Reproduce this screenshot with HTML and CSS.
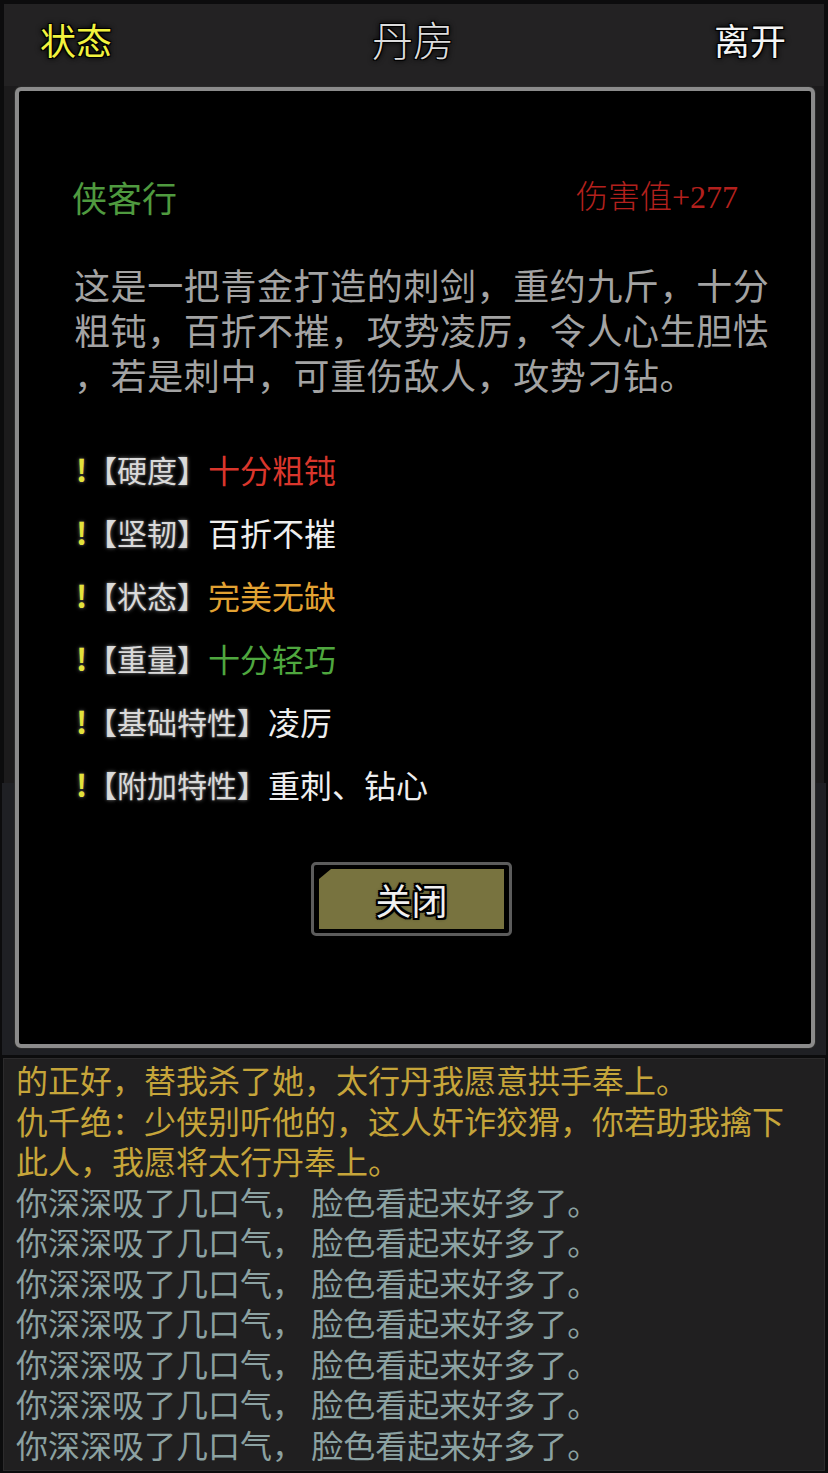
FILE: index.html
```html
<!DOCTYPE html>
<html lang="zh-CN">
<head>
<meta charset="utf-8">
<title>丹房</title>
<link rel="stylesheet" href="styles.css">
</head>
<body>
<div class="app">
  <header class="header">
    <span class="hbtn hbtn-status">状态</span>
    <span class="htitle">丹房</span>
    <span class="hbtn hbtn-leave">离开</span>
  </header>
  <div class="scene"></div>
  <div class="lower"></div>
  <div class="log">
    <p class="log-line y">的正好，替我杀了她，太行丹我愿意拱手奉上。</p>
    <p class="log-line y">仇千绝：少侠别听他的，这人奸诈狡猾，你若助我擒下</p>
    <p class="log-line y">此人，我愿将太行丹奉上。</p>
    <p class="log-line t">你深深吸了几口气， 脸色看起来好多了。</p>
    <p class="log-line t">你深深吸了几口气， 脸色看起来好多了。</p>
    <p class="log-line t">你深深吸了几口气， 脸色看起来好多了。</p>
    <p class="log-line t">你深深吸了几口气， 脸色看起来好多了。</p>
    <p class="log-line t">你深深吸了几口气， 脸色看起来好多了。</p>
    <p class="log-line t">你深深吸了几口气， 脸色看起来好多了。</p>
    <p class="log-line t">你深深吸了几口气， 脸色看起来好多了。</p>
  </div>

  <div class="modal">
    <div class="title-row">
      <span class="item-name">侠客行</span>
      <span class="item-dmg">伤害值+277</span>
    </div>
    <div class="desc">
      <span class="desc-line">这是一把青金打造的刺剑，重约九斤，十分</span>
      <span class="desc-line">粗钝，百折不摧，攻势凌厉，令人心生胆怯</span>
      <span class="desc-line">，若是刺中，可重伤敌人，攻势刁钻。</span>
    </div>
    <ul class="attrs">
      <li class="attr"><span class="bang">!</span><span class="label">【硬度】</span><span class="val red">十分粗钝</span></li>
      <li class="attr"><span class="bang">!</span><span class="label">【坚韧】</span><span class="val white">百折不摧</span></li>
      <li class="attr"><span class="bang">!</span><span class="label">【状态】</span><span class="val orange">完美无缺</span></li>
      <li class="attr"><span class="bang">!</span><span class="label">【重量】</span><span class="val green">十分轻巧</span></li>
      <li class="attr"><span class="bang">!</span><span class="label">【基础特性】</span><span class="val white">凌厉</span></li>
      <li class="attr"><span class="bang">!</span><span class="label">【附加特性】</span><span class="val white">重刺、钻心</span></li>
    </ul>
    <div class="btn-row">
      <div class="btn"><div class="btn-inner">关闭</div></div>
    </div>
  </div>
</div>
</body>
</html>
```

FILE: styles.css
```css
* { box-sizing: border-box; }
html, body { margin: 0; padding: 0; background: #0c0c0d; }
body {
  font-family: "Noto Sans CJK SC", "Noto Sans", sans-serif;
}
.app {
  width: 828px;
  height: 1473px;
  position: relative;
  overflow: hidden;
  background: #0c0c0d;
}
.header {
  height: 82px;
  margin: 4px 4px 0;
  background: #232223;
  display: flex;
  align-items: center;
  justify-content: space-between;
  padding: 0 38px 12px 36px;
}
.hbtn, .htitle {
  font-size: 36px;
  line-height: 40px;
  text-shadow: 1px 1px 0 #000, -1px -1px 0 #000, 1px -1px 0 #000, -1px 1px 0 #000, 0 0 4px #000, 0 0 6px #000;
}
.hbtn-status { color: #f2f23e; }
.hbtn-leave { color: #f4f4f4; }
.htitle {
  font-size: 41px;
  font-weight: 300;
  color: #dcdcdc;
  margin-bottom: 3px;
}
.scene {
  height: 697px;
  margin: 0 4px;
  background: #1c1b1c;
}
.lower {
  height: 272px;
  margin: 0 2px;
  background: #1f2024;
}
.log {
  height: 413px;
  margin: 3px 3px 0;
  background: #201f20;
  border: 1px solid #2c2b2c;
  padding: 0 0 0 12px;
}
.log-line {
  margin: 0;
  font-size: 32px;
  line-height: 40.5px;
  white-space: nowrap;
}
.log-line.y { color: #c6a53a; }
.log-line.t { color: #8ca2a2; }

.modal {
  position: absolute;
  left: 15px;
  top: 87px;
  width: 800px;
  height: 961px;
  background: #000;
  border: 4px solid #8b8b8b;
  border-radius: 6px;
  box-shadow: 0 0 0 1px #2a2a2a;
  padding: 86px 73px 0 53px;
  display: flex;
  flex-direction: column;
}
.title-row {
  display: flex;
  justify-content: space-between;
  align-items: center;
  height: 40px;
}
.item-name {
  font-size: 35px;
  line-height: 40px;
  color: #4f9a3f;
}
.item-dmg {
  font-family: "Liberation Serif", "Noto Sans CJK SC", serif;
  font-size: 32px;
  line-height: 40px;
  color: #b3201d;
  font-weight: 300;
}
.desc {
  margin-top: 45px;
  display: flex;
  flex-direction: column;
  padding-left: 2px;
}
.desc-line {
  font-size: 36px;
  line-height: 45px;
  letter-spacing: 0.6px;
  color: #a3a3a3;
  white-space: nowrap;
}
.attrs {
  list-style: none;
  margin: 40px 0 0;
  padding: 0 0 0 4px;
}
.attr {
  height: 63px;
  display: flex;
  align-items: center;
  white-space: nowrap;
}
.bang {
  font-size: 30px;
  color: #e3e23a;
  font-weight: 700;
  text-shadow: 0 0 4px #555, 0 0 2px #444;
  width: 11px;
}
.label {
  font-size: 30px;
  color: #dadada;
  text-shadow: 0 0 4px #666, 0 0 2px #555;
  margin-right: 1px;
}
.val {
  font-size: 32px;
}
.val.red { color: #d9362c; }
.val.white { color: #eeeeee; }
.val.orange { color: #e2a233; }
.val.green { color: #4fa73f; }
.btn-row {
  margin-top: 47px;
  display: flex;
  justify-content: center;
  padding-left: 13px;
}
.btn {
  width: 201px;
  height: 74px;
  border: 3px solid #5c5c5c;
  border-radius: 5px;
  background: #000;
  padding: 4px 5px 4px 5px;
}
.btn-inner {
  width: 100%;
  height: 100%;
  background: #78733f;
  clip-path: polygon(12px 0, 100% 0, 100% 100%, 0 100%, 0 10px);
  display: flex;
  align-items: center;
  justify-content: center;
  font-size: 36px;
  line-height: 40px;
  color: #f0f0f0;
  text-shadow: 2px 2px 0 #000, -2px -2px 0 #000, 2px -2px 0 #000, -2px 2px 0 #000, 0 2px 0 #000, 0 -2px 0 #000, 2px 0 0 #000, -2px 0 0 #000, 0 0 4px #000;
}
```
